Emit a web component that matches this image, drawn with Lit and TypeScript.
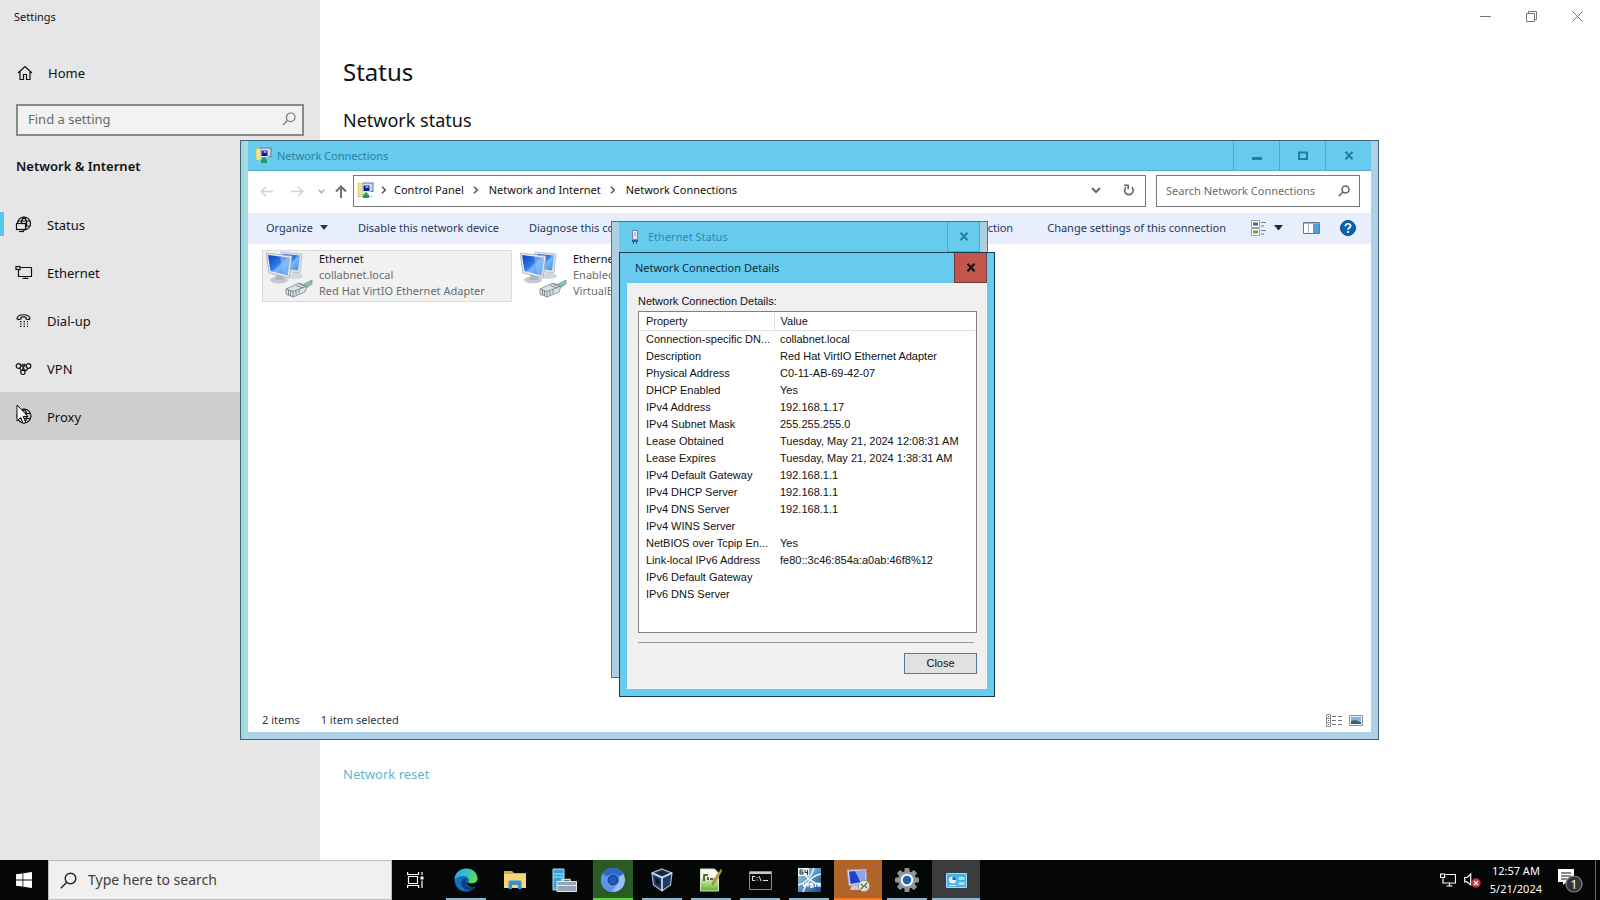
import { LitElement, html, svg, css, nothing } from "lit";
import { customElement } from "lit/decorators.js";
import { classMap } from "lit/directives/class-map.js";

const NAV = [
  {
    label: "Status",
    icon: svg`<circle cx="9" cy="7.5" r="6.5"/><path d="M9 1C5.500 4 5.500 11 9 14M9 1c3.500 3 3.500 10 0 13M3 5h12M8 10h7.500"/><rect class="fill-bg" x="1.500" y="7.500" width="9" height="6"/><path d="M4 15.500h5"/>`,
  },
  {
    label: "Ethernet",
    icon: svg`<path d="M5.500 3.500h11v9H3.500V6M7.500 14.500h6M10.500 12.500v2"/><rect x="1" y="2.500" width="4" height="3"/>`,
  },
  {
    label: "Dial-up",
    icon: svg`<path d="M2 6.500C3 1.500 14 1.500 15 6.500l-1 1-3-.5V5.300c-1.500-.5-3.500-.5-5 0V7L3 7.500z"/><path stroke-dasharray="1.500 2" d="M5 9.700h8M5 12h8M5 14.300h8"/>`,
  },
  {
    label: "VPN",
    icon: svg`<circle cx="3.500" cy="6" r="2.300"/><circle cx="13.500" cy="6" r="2.300"/><circle cx="7.800" cy="12.300" r="2.200"/><path d="M5.500 5c3 0 2.500 5 5 5.500 1.500 0 2-1 2-2.200M11.500 5C9 5 8.500 7 7.500 10M4.500 8l2 2.500M7 4l1.500 1.200L10 4"/>`,
  },
  {
    label: "Proxy",
    icon: svg`<circle cx="9" cy="8" r="7"/><path d="M9 1C5.500 4 5.500 12 9 15M9 1c3.500 3 3.500 11 0 14M2.500 5.500h13M2.500 10.500h13"/>`,
  },
];

const DETAILS: [string, string][] = [
  ["Connection-specific DN...", "collabnet.local"],
  ["Description", "Red Hat VirtIO Ethernet Adapter"],
  ["Physical Address", "C0-11-AB-69-42-07"],
  ["DHCP Enabled", "Yes"],
  ["IPv4 Address", "192.168.1.17"],
  ["IPv4 Subnet Mask", "255.255.255.0"],
  ["Lease Obtained", "Tuesday, May 21, 2024 12:08:31 AM"],
  ["Lease Expires", "Tuesday, May 21, 2024 1:38:31 AM"],
  ["IPv4 Default Gateway", "192.168.1.1"],
  ["IPv4 DHCP Server", "192.168.1.1"],
  ["IPv4 DNS Server", "192.168.1.1"],
  ["IPv4 WINS Server", ""],
  ["NetBIOS over Tcpip En...", "Yes"],
  ["Link-local IPv6 Address", "fe80::3c46:854a:a0ab:46f8%12"],
  ["IPv6 Default Gateway", ""],
  ["IPv6 DNS Server", ""],
];

const reset = css`
  * { box-sizing: border-box; }
  button, input {
    font: inherit; color: inherit; margin: 0; padding: 0;
    border: 0; border-radius: 0; background: none; outline: 0;
  }
  button { display: flex; align-items: center; justify-content: center; }
  svg { display: block; flex: none; }
  h1, h2, h3, p, ul, ol { margin: 0; padding: 0; font-weight: 400; list-style: none; }
`;

const netFolder = html`<svg width="17" height="17" viewBox="0 0 17 17">
  <path fill="#f3e487" stroke="#c9b65a" stroke-width=".6" d="M1 1.500h3.500L6 3v10H1z"/>
  <rect x="6" y="1" width="10" height="8.500" fill="#cdd5e4" stroke="#6f7a94"/>
  <rect x="6" y="3" width="7" height="6.500" fill="#101a90" stroke="#dfe5f3"/>
  <path fill="#7ba4ee" d="M8.500 4h3v2h-3z"/>
  <path fill="#b9c3b4" d="M0 14h16v1H0z"/>
  <path fill="#1d9c67" d="M7.500 10.500h3v2H12v3.500H6v-3.500h1.500z"/>
</svg>`;

const crumb = html`<svg width="6" height="8" viewBox="0 0 6 8"><path d="M1 .8 4.300 4 1 7.200" fill="none" stroke="#555" stroke-width="1.500"/></svg>`;

const closeGlyph = html`<svg width="10" height="9" viewBox="0 0 10 9"><path d="M1.500.7 8.500 8.300M8.500.7 1.500 8.300" fill="none" stroke="currentColor" stroke-width="2"/></svg>`;

/** Settings application, filling the desktop behind the other windows. */
@customElement("settings-app")
class SettingsApp extends LitElement {
  static styles = [reset, css`
    :host { display: grid; grid-template-columns: 320px 1fr; background: #fff; color: #111; font-size: 13px; line-height: 20px; }
    aside { background: #e6e6e6; }
    .title { font-size: 11px; height: 33px; line-height: 33px; padding-left: 14px; }
    .home { height: 40px; margin-top: 20px; width: 100%; justify-content: flex-start; padding-left: 17px; gap: 15px; }
    .search {
      display: flex; align-items: center; height: 32px; margin: 11px 16px 0;
      border: 2px solid #8a8a8a; background: #f2f2f2; padding: 0 6px 2px 10px;
    }
    .search input { flex: 1; min-width: 0; }
    .search input::placeholder { color: #6a6a6a; opacity: 1; }
    h3 { font-size: 13px; font-weight: 600; line-height: 24px; margin: 18px 16px 22px; }
    .item { width: 100%; height: 48px; justify-content: flex-start; padding: 2px 0 0 15px; gap: 14px; position: relative; }
    .item.hover { background: #cecece; }
    .item.active::before { content: ""; position: absolute; left: 0; top: 12px; width: 4px; height: 24px; background: #55c8ec; }
    .line { fill: none; stroke: #111; stroke-width: 1.200; }
    .fill-bg { fill: #e6e6e6; }
    main { display: flex; flex-direction: column; padding-left: 23px; }
    .controls { display: flex; justify-content: flex-end; margin-left: -23px; }
    .controls button { width: 46px; height: 32px; color: #777; }
    h1 { font-size: 24px; line-height: 32px; margin-top: 24px; }
    h2 { font-size: 18px; line-height: 24px; margin-top: 20px; }
    a { color: #5fb6cf; text-decoration: none; margin: auto 0 76px; align-self: flex-start; }
  `];
  render() {
    return html`
      <aside>
        <div class="title">Settings</div>
        <button class="home">
          <svg width="16" height="16" viewBox="0 0 16 16" class="line"><path d="M1 8 8 1.500 15 8M3 6.500v8h3.500v-5h3v5H13v-8"/></svg>Home
        </button>
        <label class="search">
          <input type="text" placeholder="Find a setting" aria-label="Find a setting">
          <svg width="14" height="14" viewBox="0 0 14 14" fill="none" stroke="#777" stroke-width="1.200"><circle cx="8.700" cy="5.300" r="4.300"/><path d="M5.500 8.500 1 13"/></svg>
        </label>
        <h3>Network &amp; Internet</h3>
        <nav>
          ${NAV.map((n, i) => html`<button class=${classMap({ item: true, active: i === 0, hover: i === 4 })}>
            <svg width="18" height="18" viewBox="0 0 18 18" class="line">${n.icon}</svg>${n.label}
          </button>`)}
        </nav>
      </aside>
      <main>
        <div class="controls">
          <button aria-label="Minimize"><svg width="11" height="11" viewBox="0 0 11 11"><path d="M0 5.500h11" stroke="currentColor"/></svg></button>
          <button aria-label="Restore"><svg width="11" height="11" viewBox="0 0 11 11" fill="none" stroke="currentColor"><path d="M.5 2.500h8v8h-8zM2.500 2V.5h8v8H9"/></svg></button>
          <button aria-label="Close"><svg width="11" height="11" viewBox="0 0 11 11"><path d="M.5.5l10 10M10.500.5l-10 10" stroke="currentColor"/></svg></button>
        </div>
        <h1>Status</h1>
        <h2>Network status</h2>
        <a href="#reset">Network reset</a>
      </main>`;
  }
}

/** Explorer window that lists the network adapters. */
@customElement("connections-window")
class ConnectionsWindow extends LitElement {
  static styles = [reset, css`
    :host {
      display: flex; flex-direction: column; border: 1px solid #3f6478; padding: 0 7px 7px;
      background: linear-gradient(90deg, #a0d8d8, #addbe6 7px, #aed2e5 8px); font-size: 11px; line-height: 16px; color: #111;
    }
    header { display: flex; align-items: center; height: 30px; background: #66cbec; border-bottom: 1px solid #55aecd; color: #2d8299; padding-left: 7px; }
    header .name { flex: 1; padding-left: 5px; }
    header button { width: 46px; height: 29px; border-left: 1px solid #4ba9c9; color: #237f9c; }
    .nav { display: flex; align-items: center; background: #fff; height: 42px; padding: 4px 11px 6px 3px; }
    .nav > button { height: 32px; color: #555; }
    .wide { width: 31px; }
    .thin { width: 16px; }
    .up { width: 24px; }
    .path { flex: 1; display: flex; align-items: center; height: 32px; border: 1px solid #777; padding: 0 0 2px 3px; }
    .path .sep { display: flex; width: 25px; justify-content: center; }
    .path .sep.first { width: 20px; }
    .path .tool { width: 33px; height: 30px; color: #666; }
    .path .grow { flex: 1; }
    .find { display: flex; align-items: center; width: 204px; height: 32px; border: 1px solid #777; margin-left: 10px; padding: 0 9px; }
    .find input { flex: 1; min-width: 0; }
    .find input::placeholder { color: #6b6b6b; opacity: 1; }
    .commands { display: flex; justify-content: space-between; height: 31px; background: #e9eefc; color: #1e395b; padding: 0 15px 2px 18px; }
    .group { display: flex; align-items: center; gap: 30px; white-space: nowrap; }
    .group.settings { gap: 34px; }
    .group.icons { gap: 20px; margin-left: -10px; }
    .group button { gap: 7px; }
    .items { flex: 1; display: flex; align-items: flex-start; gap: 4px; background: #fff; padding: 6px 14px; min-height: 0; }
    .items li { display: flex; width: 250px; height: 52px; padding: 0 3px; gap: 4px; border: 1px solid transparent; white-space: nowrap; }
    .items li.selected { background: #f1f1f1; border-color: #dadada; }
    .items p { color: #6b6b6b; }
    .items .label { color: #111; }
    footer { display: flex; align-items: center; gap: 21px; background: #fff; height: 24px; padding: 0 8px 0 14px; color: #2a3546; }
    footer .views { margin-left: auto; display: flex; gap: 7px; }
  `];

  adapterIcon() {
    return svg`<svg width="49" height="48" viewBox="0 0 49 48">
      <defs>
        <linearGradient id="scr" x1="0" y1="0" x2="1" y2="1"><stop offset="0" stop-color="#0a3fc4"/><stop offset=".45" stop-color="#2f7be8"/><stop offset=".55" stop-color="#7db7f7"/><stop offset="1" stop-color="#3d8bee"/></linearGradient>
      </defs>
      <ellipse cx="29" cy="25" rx="8" ry="3" fill="#d5d8dc"/>
      <path d="M15 1l21 2-2 19-18-2z" fill="#dfe3e8" stroke="#a9b0b9" stroke-width=".7"/>
      <path d="M17 3l17 1.500-2 15-14-2z" fill="url(#scr)"/>
      <ellipse cx="13" cy="29" rx="9" ry="3.500" fill="#c6c9cf"/>
      <path d="M10 24h7l1 5h-9z" fill="#b1b5bc"/>
      <path d="M0 2l26 3-3 22-20-5z" fill="#e6e9ed" stroke="#a3aab4" stroke-width=".8"/>
      <path d="M2 4l22 2.700-2.500 17.800L4.500 20z" fill="url(#scr)"/>
      <path d="M14 5.500l10 1.200-2.500 17.800-4-1z" fill="#8fc2fa" opacity=".55"/>
      <path d="M36 34l10-5v4l-9 6z" fill="#8fc0c0" stroke="#5f9294" stroke-width=".7"/>
      <path d="M20 38l13-6 8 3-2 6-12 5-7-3z" fill="#dde2e4" stroke="#7b8589" stroke-width=".8"/>
      <path d="M20 38l7 2.500V46M27 40.500l13-5M22.500 39v5M24.500 40v5M30 34.500l7 2.500M33 33l6.500 2.500M30 40v4M33 38.500v4" fill="none" stroke="#68747a" stroke-width=".8"/>
    </svg>`;
  }

  adapter(name: string, state: string, device: string, selected = false) {
    return html`<li class=${selected ? "selected" : nothing}>${this.adapterIcon()}
      <div><p class="label">${name}</p><p>${state}</p><p>${device}</p></div></li>`;
  }

  render() {
    return html`
      <header>
        ${netFolder}<span class="name">Network Connections</span>
        <button aria-label="Minimize"><svg width="10" height="10" viewBox="0 0 10 10"><path d="M0 6h10v3H0z" fill="currentColor"/></svg></button>
        <button aria-label="Maximize"><svg width="10" height="9" viewBox="0 0 10 9"><path d="M1 1.500h8v6.500H1z" fill="none" stroke="currentColor" stroke-width="2"/></svg></button>
        <button aria-label="Close">${closeGlyph}</button>
      </header>
      <div class="nav">
        <button class="wide" aria-label="Back"><svg width="13" height="11" viewBox="0 0 13 11" fill="none" stroke="#d3d3d3" stroke-width="1.500"><path d="M6 .8 1.200 5.500 6 10.200M1.200 5.500H13"/></svg></button>
        <button class="wide" aria-label="Forward"><svg width="13" height="11" viewBox="0 0 13 11" fill="none" stroke="#d3d3d3" stroke-width="1.500"><path d="M7 .8l4.800 4.700L7 10.200M11.800 5.500H0"/></svg></button>
        <button class="thin" aria-label="Recent locations"><svg width="7" height="5" viewBox="0 0 7 5"><path d="M.7.8 3.500 3.800 6.300.8" fill="none" stroke="#b0b0b0" stroke-width="1.500"/></svg></button>
        <button class="up" aria-label="Up"><svg width="12" height="13" viewBox="0 0 12 13" fill="none" stroke="#707070" stroke-width="2"><path d="M1 6.500l5-5 5 5M6 2v11"/></svg></button>
        <div class="path">
          ${netFolder}
          <span class="sep first">${crumb}</span><button>Control Panel</button>
          <span class="sep">${crumb}</span><button>Network and Internet</button>
          <span class="sep">${crumb}</span><button>Network Connections</button>
          <span class="grow"></span>
          <button class="tool" aria-label="Previous locations"><svg width="10" height="7" viewBox="0 0 10 7"><path d="M1 1l4 4 4-4" fill="none" stroke="currentColor" stroke-width="2"/></svg></button>
          <button class="tool" aria-label="Refresh"><svg width="12" height="12" viewBox="0 0 12 12" fill="none" stroke="currentColor" stroke-width="1.600"><path d="M8.800 3.200A4.300 4.300 0 1 1 3 3.200"/><path d="M1 1.300h4.200v4"/></svg></button>
        </div>
        <label class="find">
          <input type="text" placeholder="Search Network Connections" aria-label="Search Network Connections">
          <svg width="12" height="12" viewBox="0 0 12 12" fill="none" stroke="#666" stroke-width="1.600"><circle cx="7.500" cy="4.500" r="3.500"/><path d="M5 7 .8 11.200"/></svg>
        </label>
      </div>
      <div class="commands">
        <div class="group">
          <button>Organize <svg width="8" height="5" viewBox="0 0 8 5"><path d="M0 0h8L4 5z" fill="#1e395b"/></svg></button>
          <button>Disable this network device</button>
          <button>Diagnose this connection</button>
          <button>Rename this connection</button>
        </div>
        <div class="group settings">
          <button>View status of this connection</button>
          <button>Change settings of this connection</button>
          <div class="group icons">
            <button aria-label="Change your view">
              <svg width="17" height="16" viewBox="0 0 17 16"><path d="M1.500.5h8v7h-8zM1.500 8.500h8v7h-8z" fill="#fff" stroke="#98a69a"/><path d="M3 2.500h5v3H3z" fill="#4d6287"/><path d="M3 10.500h5v3H3z" fill="#6ba057"/><path d="M11 2.500h5M11 6h3M11 10.500h5M11 14h3" stroke="#777b8a"/></svg>
              <svg width="9" height="6" viewBox="0 0 9 6"><path d="M0 0h9L4.500 5.500z" fill="#1c2c44"/></svg>
            </button>
            <button aria-label="Show the preview pane"><svg width="17" height="12" viewBox="0 0 17 12"><path d="M.5.5h16v11H.5z" fill="#fff" stroke="#6b7690"/><path d="M10 1h6v10h-6z" fill="#4d9fd6"/><path d="M5.500 1v10M1 1.500h15" stroke="#a3b0c6"/></svg></button>
            <button aria-label="Get help"><svg width="16" height="16" viewBox="0 0 16 16"><circle cx="8" cy="8" r="7.500" fill="#0b63b5" stroke="#08498a"/><path d="M5.400 6.200C5.400 2.900 10.700 3 10.600 6c0 1.800-2.500 1.800-2.500 3.700" fill="none" stroke="#fff" stroke-width="1.700"/><circle cx="8.100" cy="12" r="1.100" fill="#fff"/></svg></button>
          </div>
        </div>
      </div>
      <ul class="items">
        ${this.adapter("Ethernet", "collabnet.local", "Red Hat VirtIO Ethernet Adapter", true)}
        ${this.adapter("Ethernet 2", "Enabled", "VirtualBox Host-Only Adapter")}
      </ul>
      <footer>
        <span>2 items</span><span>1 item selected</span>
        <div class="views">
          <button aria-label="Details view"><svg width="16" height="13" viewBox="0 0 16 13"><path d="M.5.5h4v12h-4zM.5 4.500h4M.5 8.500h4" fill="#fff" stroke="#8d8a9a"/><path d="M6 2.500h10M6 6.500h10M6 10.500h10" stroke="#777583" stroke-dasharray="4 2"/><path d="M2 2.500h1M2 6.500h1M2 10.500h1" stroke="#555"/></svg></button>
          <button aria-label="Large icons view"><svg width="14" height="11" viewBox="0 0 14 11"><path d="M.5.5h13v10H.5z" fill="#e8f3fa" stroke="#8198a8"/><path d="M2 2h10v4H2z" fill="#8ab4e0"/><path d="M2 9V6l4-1 6 2v2z" fill="#3d6064"/></svg></button>
        </div>
      </footer>`;
  }
}

/** Framed dialog with a caption and a close button. */
@customElement("caption-dialog")
class CaptionDialog extends LitElement {
  static properties = { caption: {}, active: { type: Boolean, reflect: true } };
  declare caption: string;
  declare active: boolean;
  static styles = [reset, css`
    :host {
      display: flex; flex-direction: column; border: 1px solid #4c7688; padding: 0 7px 7px;
      background: #acd0e2; font-size: 11px; line-height: 16px;
    }
    :host([active]) { border-color: #173e55; background: #66cbec; }
    header { display: flex; align-items: center; height: 30px; background: #66cbec; color: #2f8ba6; padding-left: 12px; gap: 9px; }
    :host([active]) header { color: #0c2b3d; padding-left: 8px; }
    .name { flex: 1; }
    header button { width: 33px; height: 30px; border: 1px solid #4fa9c6; border-top: 0; color: #25809b; }
    :host([active]) header button { background: #c3564c; border-color: #6d3b40; color: #111; }
    .body { flex: 1; background: #f0f0f0; }
  `];
  render() {
    return html`
      <header><slot name="icon"></slot><span class="name">${this.caption}</span><button aria-label="Close">${closeGlyph}</button></header>
      <div class="body"><slot></slot></div>`;
  }
}

@customElement("task-bar")
class TaskBar extends LitElement {
  static styles = [reset, css`
    :host { display: flex; background: #050606; color: #fff; font-size: 11px; line-height: 18px; }
    .start { width: 48px; }
    .search { display: flex; align-items: center; gap: 11px; width: 344px; background: #f0f0f0; border: 1px solid #bcbcbc; padding: 0 11px; font-size: 14px; color: #333; }
    .search input { flex: 1; min-width: 0; }
    .search input::placeholder { color: #404040; opacity: 1; }
    .apps { display: flex; gap: 1px; }
    .apps button { width: 48px; position: relative; }
    .apps .view { width: 49px; padding-right: 2px; }
    .apps .open::after { content: ""; position: absolute; left: 4px; right: 4px; bottom: 0; height: 2px; background: #8fb7cd; }
    .apps .alert { background: linear-gradient(#2a5a26, #2a5a26) center / 40px 100% no-repeat; }
    .apps .alert::after { background: #56d83b; }
    .apps .call { background: #b1642a; }
    .apps .call::after { background: #ff7a14; left: 0; right: 0; }
    .apps .current { background: #3a3c3d; }
    .apps .current::after { left: 0; right: 0; }
    .tray { margin-left: auto; display: flex; align-items: center; gap: 8px; }
    .clock { text-align: center; padding: 0 12px 0 1px; }
    .note { width: 41px; height: 40px; justify-content: flex-start; padding-left: 3px; }
    .peek { width: 5px; height: 40px; border-left: 1px solid #666; }
  `];
  render() {
    return html`
      <button class="start" aria-label="Start"><svg width="16" height="16" viewBox="0 0 16 16"><path fill="#fff" d="M0 2.300 6.500 1.400v6.200H0zM7.300 1.300 16 0v7.600H7.300zM0 8.400h6.500v6.200L0 13.700zM7.300 8.400H16V16l-8.700-1.300z"/></svg></button>
      <label class="search">
        <svg width="17" height="17" viewBox="0 0 17 17" fill="none" stroke="#222" stroke-width="1.400"><circle cx="10.500" cy="6.500" r="5.300"/><path d="M6.600 10.400.8 16.200"/></svg>
        <input type="text" placeholder="Type here to search" aria-label="Type here to search">
      </label>
      <div class="apps">
        <button class="view" aria-label="Task View"><svg width="17" height="16" viewBox="0 0 17 16" fill="none" stroke="#fff" stroke-width="1.200"><path d="M.6 0v2.500h11V0M.6 16v-2.500h11V16M1.500 4.500h9v7h-9zM15 0v3M15 8.500V16"/><path d="M13.500 4.500h3v3h-3z" fill="#fff" stroke="none"/></svg></button>
        <button class="open" aria-label="Microsoft Edge"><svg width="24" height="24" viewBox="0 0 24 24">
          <defs><linearGradient id="eg" x1="0" y1="0" x2="1" y2=".4"><stop offset="0" stop-color="#2a9fe0"/><stop offset=".55" stop-color="#35c1c5"/><stop offset="1" stop-color="#5bdc55"/></linearGradient></defs>
          <circle cx="12" cy="12" r="11.500" fill="#1470bf"/>
          <path d="M.5 11C2-3 23-3 23.500 10.500c0 4-4 5.500-7.500 4.800-2-.4-1.500-1.300-1-2.300C16 8 8 5.500.5 11z" fill="url(#eg)"/>
          <path d="M8 12c-2.500 5 2 11 8.500 10.500 2.500-.5 5-2.500 6-4.500-5 2.500-10.500.5-10.500-3.500 0-1.500.7-2.500 1.500-3.300C12 9.500 9 10 8 12z" fill="#0a4187"/>
          <path d="M15 15.300c4 1 7.500-.5 8.500-3.300v5l-1.500 1.500c-4 1.500-9 0-9.500-4.500z" fill="#050606"/></svg></button>
        <button aria-label="File Explorer"><svg width="22" height="20" viewBox="0 0 22 20"><path d="M0 1h8l2 2h12v15H0z" fill="#e0a93b"/><path d="M0 4h22v14H0z" fill="#f8d675"/><path d="M4.500 19v-6.500c0-1.500.7-2 2-2h9c1.300 0 2 .5 2 2V19h-3.500v-4h-6v4z" fill="#3b92cf"/></svg></button>
        <button aria-label="Server Manager"><svg width="25" height="25" viewBox="0 0 25 25"><path d="M1 1h11v21H1z" fill="#35a3dc" stroke="#b5def2"/><path d="M1 6h11M1 9h11" stroke="#b5def2"/><path d="M10 11.500h8v2h-8z" fill="none" stroke="#cfd9df" stroke-width="1.500"/><path d="M5 13.500h19.500v10H5z" fill="#93a5b1" stroke="#e0e7eb"/><path d="M5 17.500h19.500" stroke="#e0e7eb"/></svg></button>
        <button class="open alert" aria-label="Chromium"><svg width="24" height="24" viewBox="0 0 24 24"><circle cx="12" cy="12" r="12" fill="#9cbef5"/><path d="M12 12 1.600 6A12 12 0 0 1 22.400 6z" fill="#2f65cc"/><path d="M1.600 6A12 12 0 0 0 11 24l6-9z" fill="#5a94ee"/><circle cx="12" cy="12" r="6.300" fill="#6ea0ee"/><circle cx="12" cy="12" r="5" fill="#1c57c4" stroke="#0d357f"/></svg></button>
        <button class="open" aria-label="VirtualBox"><svg width="22" height="24" viewBox="0 0 22 24"><path d="M11 1l10 4-1.500 12L11 23l-8.500-6L1 5z" fill="#1f3c66" stroke="#a9b8ca" stroke-width="1.200"/><path d="M1 5l10 4.500L21 5M11 9.500V23" fill="none" stroke="#dbe4ee" stroke-width="1.600"/><path d="M6 5l5-2 5 2-5 2z" fill="#16233a"/><path d="M4 9.500l4.500 2v6L5 15z" fill="#0c1727"/></svg></button>
        <button class="open" aria-label="Notepad++"><svg width="22" height="24" viewBox="0 0 22 24"><defs><linearGradient id="np" x1="0" y1="0" x2="0" y2="1"><stop offset=".3" stop-color="#f8fbef"/><stop offset="1" stop-color="#5fb321"/></linearGradient></defs><path d="M.5 1h14l4 4v18H.5z" fill="url(#np)" stroke="#d6e2c7"/><path d="M4 13V7h4M8 12V9M10 11h3M14 11h3" stroke="#2b3a1c" stroke-width="1.500" fill="none"/><path d="M21 1 13 13l-1 4 3-2L22 3z" fill="#d0a53a" stroke="#74602a" stroke-width=".6"/></svg></button>
        <button class="open" aria-label="Command Prompt"><svg width="23" height="19" viewBox="0 0 23 19"><path d="M.5.5h22v18H.5z" fill="#0a0a0a" stroke="#8b8e90"/><path d="M1 1h21v2H1z" fill="#c7cacc"/><path d="M6 5.500H3.500v4H6M8 6v1M8 8.500v1M10 5l2 5M14 9.500h5" stroke="#e8e8e8" fill="none"/></svg></button>
        <button class="open" aria-label="Vista 64"><svg width="23" height="24" viewBox="0 0 23 24"><defs><linearGradient id="vs" x1="0" y1="0" x2="1" y2="1"><stop offset="0" stop-color="#a9dcf4"/><stop offset="1" stop-color="#124a88"/></linearGradient></defs><path d="M0 0h23v24H0z" fill="url(#vs)"/><path d="M0 17C8 15 14 8 16 0M6 6c4 5 8 9 17 11M23 6C16 7 9 13 5 24" stroke="#e6f5fc" stroke-width="1.500" fill="none"/><path d="M0 0h11v8H0z" fill="#e9f0f2"/><path d="M5 2H2v4h3V4H2M7 2v2.500h3M9.500 2v5" stroke="#263b44" fill="none"/><path d="M5 15l1.500 4L8 15M10 15v4M15 15.500h-3V17h3v2h-3M16 15.500h3M17.500 15.500V19M20 19v-3.500h2V19" stroke="#fff" stroke-width="1.300" fill="none"/></svg></button>
        <button class="open call" aria-label="Virtual Machine"><svg width="24" height="24" viewBox="0 0 24 24"><path d="M6 17h9l1 5H4z" fill="#c8cbd4"/><path d="M1 2l19-1 1 14-18 3z" fill="#d5d9ec" stroke="#8f94ab" stroke-width=".7"/><path d="M3 3.500 18.500 2.500l1 11L4.500 16z" fill="#2341c8"/><path d="M9 3l9.500-.5 1 11-5 1z" fill="#b3c2f4" opacity=".75"/><circle cx="18" cy="18" r="5.700" fill="#e3e6da" stroke="#7b8074" stroke-width=".7"/><path d="M15 16l2.500 2.500L15 21M21 15l-2.500 2.500L21 20" fill="none" stroke="#4f6b48" stroke-width="1.200"/></svg></button>
        <button class="open" aria-label="Settings"><svg width="24" height="24" viewBox="0 0 24 24"><g fill="#8f9599"><circle cx="12" cy="12" r="9"/>${[0, 45, 90, 135].map(a => svg`<rect x="9.500" y="0" width="5" height="24" rx="1" transform=${`rotate(${a} 12 12)`}/>`)}</g><circle cx="12" cy="12" r="6.300" fill="#f3f6f8"/><circle cx="12" cy="12" r="4.200" fill="#1c62b4"/></svg></button>
        <button class="open current" aria-label="Control Panel"><svg width="21" height="15" viewBox="0 0 21 15"><path d="M.5.5h20v14H.5z" fill="#45b4e8" stroke="#9edcf7"/><circle cx="6.500" cy="7" r="3.500" fill="#eaf6fc"/><path d="M6.500 7V3.500A3.500 3.500 0 0 1 10 7z" fill="#1c6ea8"/><path d="M12.500 4h6v3h-6zM12.500 9h6v3h-6z" fill="#a9def5"/><path d="M3 12.500h7" stroke="#e4f4fb"/></svg></button>
      </div>
      <div class="tray">
        <svg width="16" height="14" viewBox="0 0 16 14" fill="none" stroke="#fff" stroke-width="1.200"><path d="M5.500 1.500h10v8.500H3V5.500M6.500 13h6M9.500 10v3"/><path d="M.6 1h4v3.500h-4z"/></svg>
        <svg width="17" height="16" viewBox="0 0 17 16"><path d="M.7 5.500h2.500L6.700 2v11L3.200 9.800H.7z" fill="none" stroke="#fff" stroke-width="1.200"/><circle cx="12" cy="11" r="4.700" fill="#c8313f"/><path d="M10 9l4 4M14 9l-4 4" stroke="#fff" stroke-width="1.300"/></svg>
        <div class="clock"><div>12:57 AM</div><div>5/21/2024</div></div>
      </div>
      <button class="note" aria-label="1 notification"><svg width="26" height="26" viewBox="0 0 26 26"><path d="M1 2h16v13H9.500L6 18v-3H1z" fill="#fff"/><path d="M4 6h10M4 9h10M4 12h6" stroke="#111" stroke-width="1.200"/><circle cx="17" cy="17" r="8" fill="#333638" stroke="#818487" stroke-width="1.200"/><text x="17" y="21.500" font-size="12" fill="#fff" text-anchor="middle">1</text></svg></button>
      <span class="peek"></span>`;
  }
}

@customElement("app-root")
class AppRoot extends LitElement {
  static styles = [reset, css`
    :host {
      display: grid; grid-template-rows: 1fr 40px; position: relative; height: 100vh; overflow: hidden;
      font-family: "Noto Sans", "Open Sans", sans-serif;
    }
    .connections { position: absolute; inset: 140px 221px 160px 240px; }
    .status { position: absolute; left: 611px; top: 221px; width: 377px; height: 457px; }
    .details { position: absolute; left: 619px; top: 252px; width: 376px; }
    .pane { padding: 10px 10px 15px 11px; font: 11px/17px "Liberation Sans", Arial, sans-serif; color: #111; }
    .list { height: 322px; margin-top: 1px; border: 1px solid #7c8087; background: #fff; padding: 1px; }
    table { width: 100%; border-collapse: collapse; table-layout: fixed; }
    .prop { width: 134px; }
    th, td { height: 17px; padding: 0 0 0 6px; font-weight: 400; text-align: left; white-space: nowrap; }
    th { border-bottom: 1px solid #dedede; }
    th:first-child { border-right: 1px solid #dedede; }
    .rule { height: 1px; background: #9a9a9a; margin: 9px 3px 10px 0; }
    .close { width: 73px; height: 21px; margin-left: auto; background: #e1e1e1; border: 1px solid #4d7ba5; }
    .cursor { position: absolute; left: 16px; top: 404px; pointer-events: none; }
  `];
  render() {
    return html`
      <settings-app></settings-app>
      <task-bar></task-bar>
      <connections-window class="connections"></connections-window>
      <caption-dialog class="status" caption="Ethernet Status">
        <svg slot="icon" width="8" height="14" viewBox="0 0 8 14"><path d="M1.500.5h5v9h-5z" fill="#eaf1fa" stroke="#7783a9"/><path d="M3.500 2.500h1v4h-1z" fill="#7680b8"/><path d="M1 10h6v2H1zM2 12h1v2H2zM5 12h1v2H5z" fill="#315f96"/></svg>
      </caption-dialog>
      <caption-dialog class="details" caption="Network Connection Details" active>
        <div class="pane">
          <div id="details-label">Network Connection Details:</div>
          <div class="list">
            <table aria-labelledby="details-label">
              <colgroup><col class="prop"><col></colgroup>
              <thead><tr><th>Property</th><th>Value</th></tr></thead>
              <tbody>${DETAILS.map(([k, v]) => html`<tr><td>${k}</td><td>${v}</td></tr>`)}</tbody>
            </table>
          </div>
          <div class="rule"></div>
          <button class="close">Close</button>
        </div>
      </caption-dialog>
      <svg class="cursor" width="13" height="21" viewBox="0 0 13 21"><path d="M1 1v16l3.700-3.500L7.200 19.500l2.500-1-2.500-6H12z" fill="#fff" stroke="#111"/></svg>`;
  }
}
